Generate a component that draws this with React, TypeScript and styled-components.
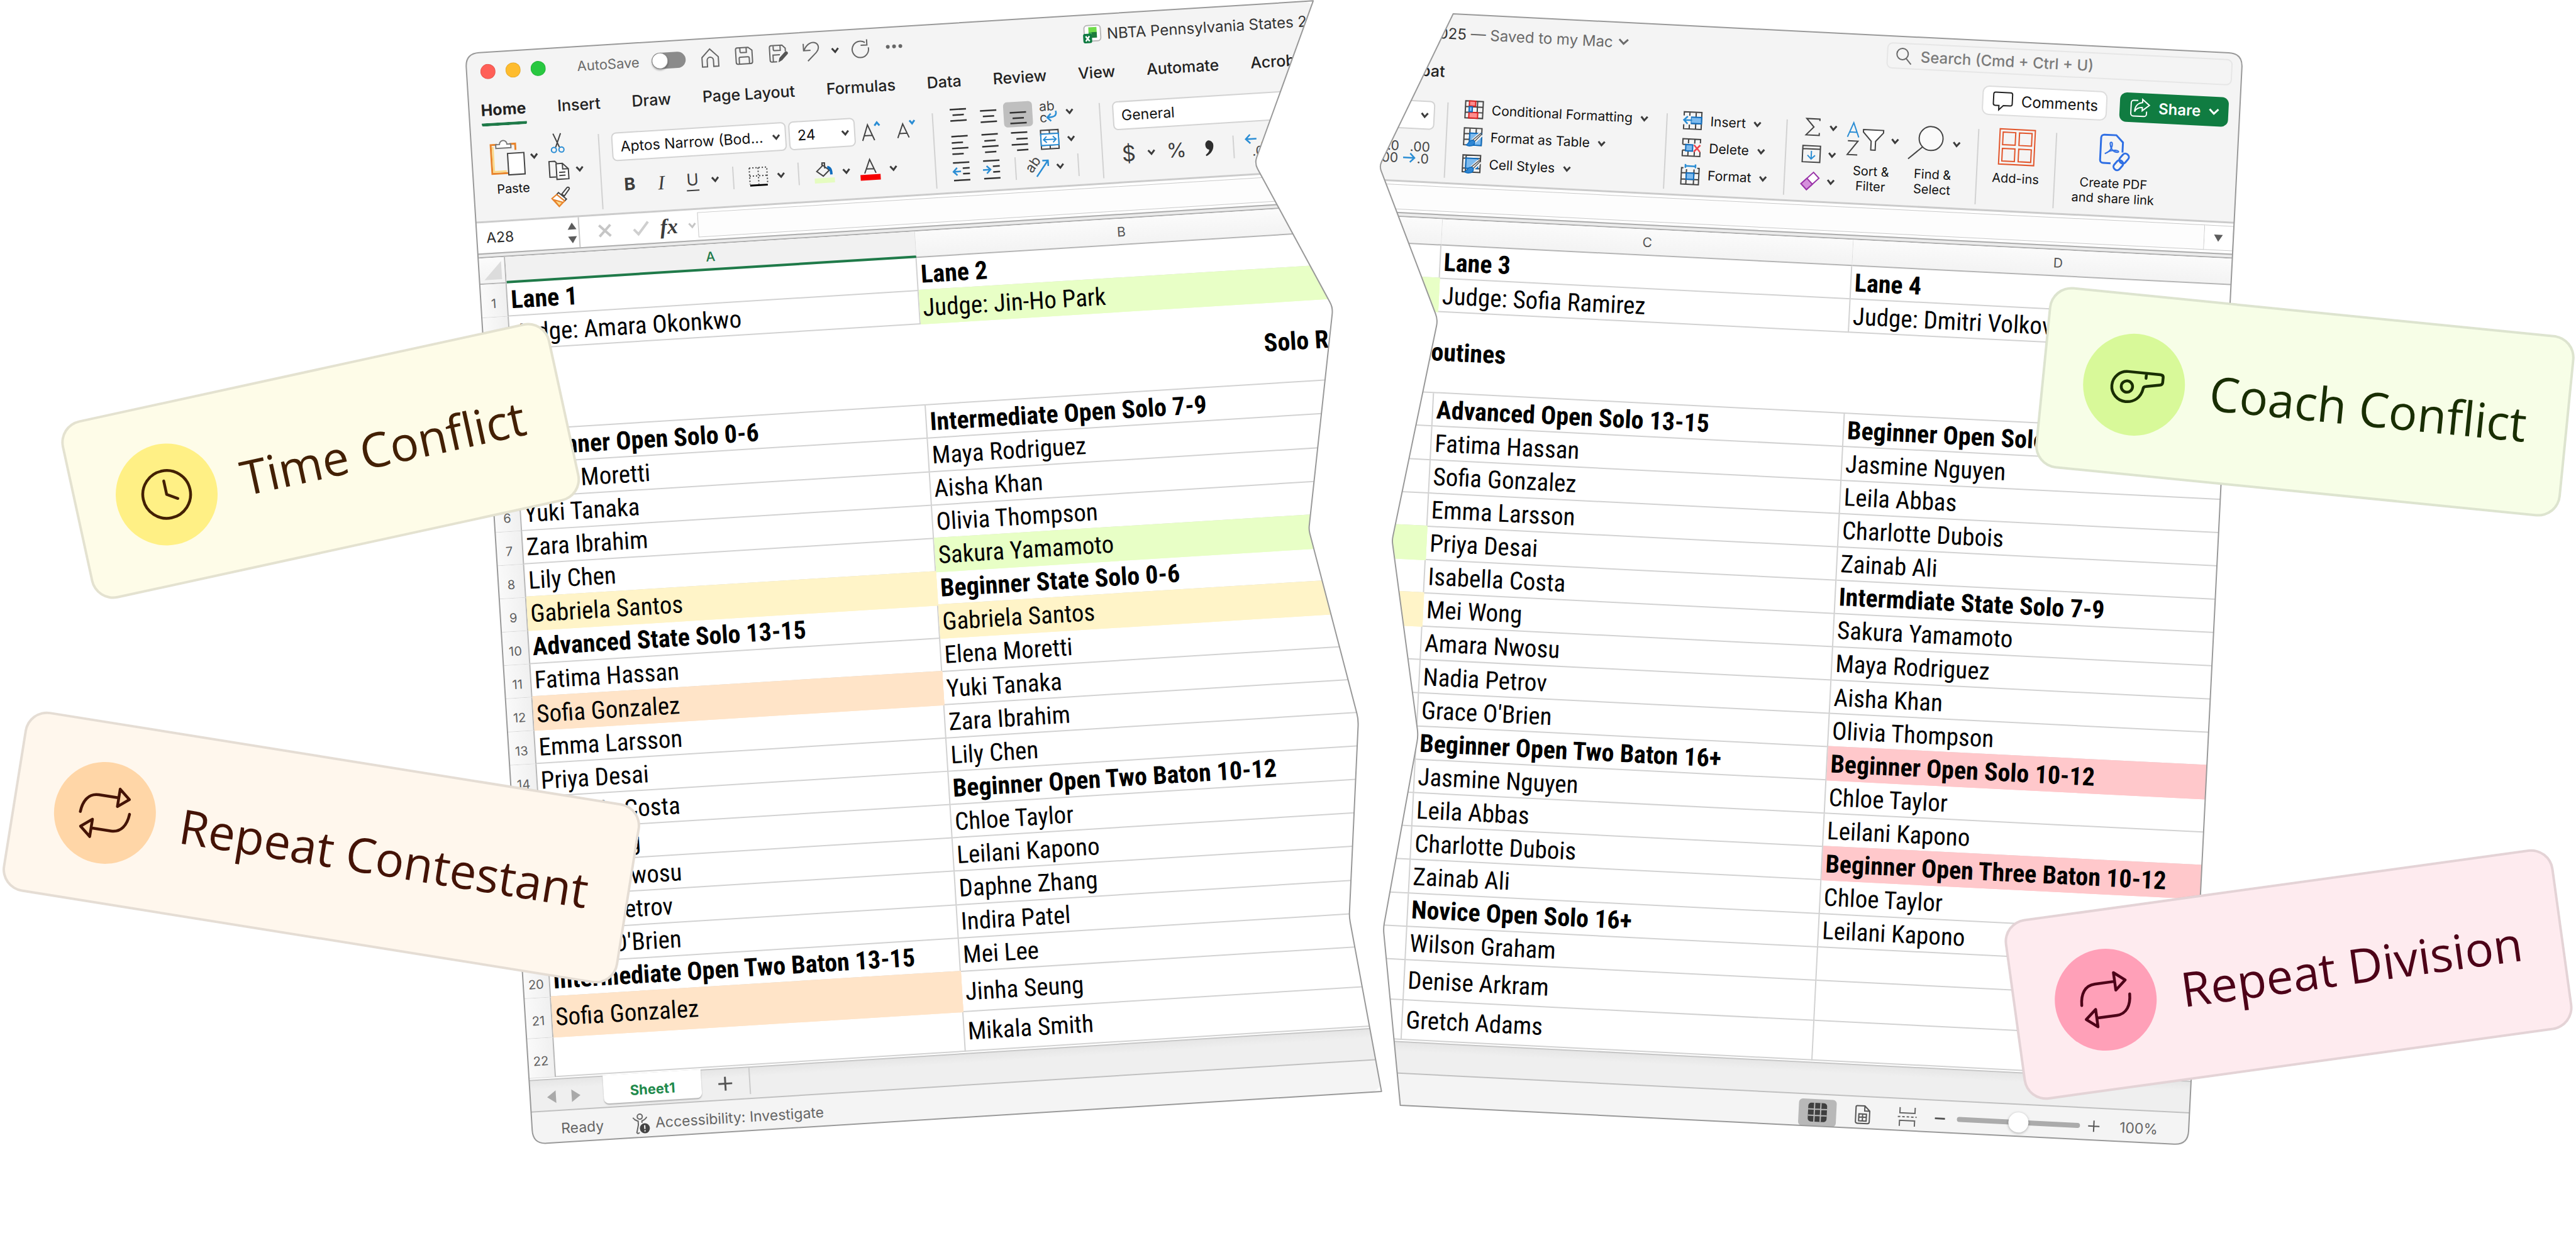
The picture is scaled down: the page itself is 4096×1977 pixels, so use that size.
import React from "react";
import styled, { createGlobalStyle, css } from "styled-components";

/* ------------------------------------------------------------------ */
/* Tokens                                                              */
/* ------------------------------------------------------------------ */

const ui = `Inter, "Liberation Sans", sans-serif`;
const cellFont = `"Roboto Condensed", Roboto, "Liberation Sans", sans-serif`;
const calloutFont = `"Open Sans", "Noto Sans", sans-serif`;

const color = {
  chrome: "#f4f4f4",
  ink: "#2b2b2b",
  muted: "#6a6a6a",
  icon: "#444444",
  blue: "#2a8dd4",
  line: "#d2d2d2",
  edge: "#999999",
  excel: "#1f7a49",
};

const fills = {
  green: "#e8ffc6",
  yellow: "#fff4c8",
  orange: "#ffe4c8",
  red: "#ffc8cb",
};
type Fill = keyof typeof fills;

const GlobalStyle = createGlobalStyle`
  *, *::before, *::after { box-sizing: border-box; }
  body { margin: 0; background: #ffffff; font-family: ${ui}; color: ${color.ink}; }
  button, input, select { font: inherit; color: inherit; margin: 0; }
  svg { display: block; flex: none; overflow: visible; }
`;

/* ------------------------------------------------------------------ */
/* Torn window geometry                                                */
/* ------------------------------------------------------------------ */

type Vertex = [x: number, y: number, radius: number];

const PANE_HEIGHT = 1738;
const LEFT_WIDTH = 1351;
const RIGHT_WIDTH = 1362;

const leftShape: Vertex[] = [
  [0, 0, 22],
  [1350, 0, 0],
  [1241, 252, 10],
  [1351, 489, 10],
  [1291, 839, 6],
  [1351, 1145, 10],
  [1317, 1458, 8],
  [1351, 1738, 0],
  [0, 1738, 22],
];

const rightShape: Vertex[] = [
  [1362, 0, 22],
  [1362, 1738, 22],
  [108, 1738, 0],
  [67, 1458, 8],
  [107, 1149, 10],
  [50, 841, 6],
  [105, 487, 10],
  [0, 248, 8],
  [105, 0, 0],
];

const polygon = (shape: Vertex[], width: number) =>
  `polygon(${shape.map(([x, y]) => `${(x / width) * 100}% ${(y / PANE_HEIGHT) * 100}%`).join(", ")})`;

function roundedPath(shape: Vertex[]) {
  const toward = (a: Vertex, b: Vertex, r: number) => {
    const d = Math.hypot(b[0] - a[0], b[1] - a[1]);
    return `${a[0] + ((b[0] - a[0]) * r) / d} ${a[1] + ((b[1] - a[1]) * r) / d}`;
  };
  const n = shape.length;
  const parts = shape.map((v, i) => {
    const prev = shape[(i + n - 1) % n];
    const next = shape[(i + 1) % n];
    return `${i ? "L" : "M"}${toward(v, prev, v[2])} Q${v[0]} ${v[1]} ${toward(v, next, v[2])}`;
  });
  return parts.join(" ") + " Z";
}

/* ------------------------------------------------------------------ */
/* Page and window frame                                               */
/* ------------------------------------------------------------------ */

const Stage = styled.main`
  position: relative;
  width: 100%;
  height: 100vh;
  overflow: hidden;
`;

const Pane = styled.section<{ $side: "left" | "right" }>`
  position: absolute;
  ${({ $side }) =>
    $side === "left"
      ? css`
          left: 18.07vw;
          top: 85px;
          width: 33vw;
          transform: rotate(-3.55deg);
          transform-origin: 0 0;
        `
      : css`
          right: 12.95vw;
          top: 85px;
          width: 33.25vw;
          transform: rotate(2.87deg);
          transform-origin: 100% 0;
        `}
`;

const PaneBody = styled.div<{ $clip: string }>`
  display: flex;
  flex-direction: column;
  overflow: hidden;
  border-radius: 18px;
  background: ${color.chrome};
  clip-path: ${({ $clip }) => $clip};
`;

const Outline = styled.svg`
  position: absolute;
  inset: 0;
  width: 100%;
  height: 100%;
  pointer-events: none;
`;

function TornPane({
  side, shape, width, children, label,
}: {
  side: "left" | "right"; shape: Vertex[]; width: number; label: string; children: React.ReactNode;
}) {
  return (
    <Pane $side={side} aria-label={label}>
      <PaneBody $clip={polygon(shape, width)}>{children}</PaneBody>
      <Outline viewBox={`0 0 ${width} ${PANE_HEIGHT}`} preserveAspectRatio="none" aria-hidden="true">
        <path d={roundedPath(shape)} fill="none" stroke={color.edge} strokeWidth="2" strokeLinejoin="round" />
      </Outline>
    </Pane>
  );
}

/* ------------------------------------------------------------------ */
/* Shared controls                                                     */
/* ------------------------------------------------------------------ */

const Row = styled.div<{ $h?: number; $gap?: number; $pl?: number; $mt?: number }>`
  display: flex;
  align-items: center;
  height: ${({ $h }) => ($h ? `${$h}px` : "auto")};
  gap: ${({ $gap = 0 }) => $gap}px;
  padding-left: ${({ $pl = 0 }) => $pl}px;
  margin-top: ${({ $mt = 0 }) => $mt}px;
`;

const Tool = styled.button<{ $w: number }>`
  display: flex;
  align-items: center;
  justify-content: center;
  flex: none;
  width: ${({ $w }) => $w}px;
  height: 40px;
  padding: 0;
  border: 0;
  border-radius: 6px;
  background: none;
`;

const PressedTool = styled(Tool)`
  background: #bfbfbf;
`;

const MiniSlot = styled.span<{ $w: number }>`
  display: flex;
  justify-content: center;
  flex: none;
  width: ${({ $w }) => $w}px;
`;

const MiniRule = styled.span`
  width: 2px;
  height: 36px;
  background: ${color.line};
`;

const I = ({ w = 32, h = 32, children, s = color.icon, sw = 2 }: {
  w?: number; h?: number; s?: string; sw?: number; children: React.ReactNode;
}) => (
  <svg width={w} height={h} viewBox={`0 0 ${w} ${h}`} fill="none" stroke={s} strokeWidth={sw} aria-hidden="true">
    {children}
  </svg>
);

const Chevron = ({ c = "#3c3c3c", big = false }: { c?: string; big?: boolean }) =>
  big ? (
    <I w={18} h={12} s={c} sw={3}><path d="M2 2l7 7 7-7" /></I>
  ) : (
    <I w={14} h={12} s={c} sw={3}><path d="M2 3l5 6 5-6" /></I>
  );

const Mini = ({ w }: { w: number }) => (
  <Tool $w={w} aria-label="More options"><Chevron /></Tool>
);

const Divide = ({ w }: { w: number }) => <MiniSlot $w={w}><MiniRule /></MiniSlot>;

/* ------------------------------------------------------------------ */
/* Title bar                                                           */
/* ------------------------------------------------------------------ */

const TitleBar = styled.header`
  display: flex;
  align-items: center;
  height: 62px;
  padding: 0 15px 0 22px;
  flex: none;
  & > * { flex: none; }
`;

const Lights = styled.div`
  display: flex;
  gap: 16px;
`;

const Light = styled.button<{ $c: string }>`
  width: 24px;
  height: 24px;
  padding: 0;
  border: 1px solid rgba(0, 0, 0, 0.1);
  border-radius: 50%;
  background: ${({ $c }) => $c};
`;

const AutoSaveLabel = styled.label`
  width: 119px;
  margin-left: 50px;
  font-size: 22px;
  color: ${color.muted};
`;

const Switch = styled.input`
  appearance: none;
  width: 54px;
  height: 26px;
  border-radius: 13px;
  background: #8b8b8b;
  &::before {
    content: "";
    display: block;
    width: 26px;
    height: 26px;
    border-radius: 50%;
    border: 1px solid #8b8b8b;
    background: #fff;
    box-shadow: 0 2px 3px rgba(0, 0, 0, 0.3);
  }
`;

const DocTitle = styled.h1<{ $ml: number }>`
  display: flex;
  align-items: center;
  gap: 8px;
  margin: 0 0 0 ${({ $ml }) => $ml}px;
  font-size: 24px;
  font-weight: 400;
  white-space: nowrap;
  color: #333;
  & small { font-size: inherit; color: ${color.muted}; }
`;

const SearchBox = styled.label`
  display: flex;
  align-items: center;
  gap: 14px;
  width: 550px;
  height: 42px;
  margin-left: auto;
  padding: 0 12px;
  border: 2px solid #e6e6e6;
  border-radius: 9px;
`;

const SearchInput = styled.input`
  flex: 1;
  min-width: 0;
  padding: 0;
  border: 0;
  outline: 0;
  background: none;
  font-size: 24px;
  font-weight: 500;
  &::placeholder { color: #7a7a7a; opacity: 1; }
`;

/* ------------------------------------------------------------------ */
/* Tab strip                                                           */
/* ------------------------------------------------------------------ */

const TabStrip = styled.nav<{ $pl: number }>`
  display: flex;
  flex: none;
  gap: 50px;
  height: 56px;
  padding: 0 18px 0 ${({ $pl }) => $pl}px;
`;

const Tab = styled.button<{ $on?: boolean }>`
  flex: none;
  height: 56px;
  padding: 15px 0 6px;
  border: 0;
  border-bottom: 5px solid ${({ $on }) => ($on ? color.excel : "transparent")};
  border-radius: 3px;
  background: none;
  font-size: 25px;
  line-height: 30px;
  font-weight: ${({ $on }) => ($on ? 700 : 500)};
  color: #222;
`;

const Pill = styled.button<{ $solid?: boolean }>`
  display: flex;
  align-items: center;
  gap: 12px;
  height: 47px;
  margin-top: 9px;
  padding: 0 12px 0 14px;
  border: 2px solid ${({ $solid }) => ($solid ? "#107c41" : "#dddddd")};
  border-radius: 11px;
  background: ${({ $solid }) => ($solid ? "#107c41" : "#ffffff")};
  color: ${({ $solid }) => ($solid ? "#ffffff" : "#111111")};
  font-size: 24px;
  font-weight: ${({ $solid }) => ($solid ? 600 : 400)};
`;

const TabActions = styled.div`
  display: flex;
  gap: 20px;
  margin-left: auto;
`;

/* ------------------------------------------------------------------ */
/* Ribbon                                                              */
/* ------------------------------------------------------------------ */

const Ribbon = styled.div`
  display: flex;
  align-items: flex-start;
  flex: none;
  height: 150px;
  padding-top: 11px;
`;

const Group = styled.div<{ $w?: number; $pl?: number; $gap?: number }>`
  display: flex;
  flex: none;
  gap: ${({ $gap = 0 }) => $gap}px;
  width: ${({ $w }) => ($w ? `${$w}px` : "auto")};
  padding-left: ${({ $pl = 0 }) => $pl}px;
`;

const Stack = styled.div`
  display: flex;
  flex-direction: column;
`;

const GroupRule = styled.span`
  flex: none;
  width: 2px;
  height: 120px;
  margin-top: 12px;
  background: ${color.line};
`;

const PasteButton = styled.button`
  display: flex;
  flex-direction: column;
  width: 92px;
  margin-top: 11px;
  padding: 0;
  border: 0;
  background: none;
`;

const PasteLabel = styled.span`
  width: 70px;
  margin-top: 7px;
  font-size: 20px;
  line-height: 28px;
  text-align: center;
  color: #111;
`;

const SelectWrap = styled.span<{ $w: number }>`
  display: grid;
  flex: none;
  align-items: center;
  width: ${({ $w }) => $w}px;
  height: 46px;
  & > * { grid-area: 1 / 1; }
  & > svg { justify-self: end; margin-right: 9px; pointer-events: none; }
`;

const Select = styled.select`
  appearance: none;
  width: 100%;
  height: 46px;
  padding: 0 12px;
  border: 2px solid #d3d3d3;
  border-radius: 8px;
  background: #fff;
  font-size: 23px;
  color: #111;
`;

const Glyph = styled.span<{ $size?: number; $weight?: number; $italic?: boolean; $line?: boolean; $serif?: boolean }>`
  font-family: ${({ $serif }) => ($serif ? `"Liberation Serif", serif` : `inherit`)};
  font-size: ${({ $size = 26 }) => $size}px;
  font-weight: ${({ $weight = 400 }) => $weight};
  font-style: ${({ $italic }) => ($italic ? "italic" : "normal")};
  line-height: 32px;
  color: #3c3c3c;
  border-bottom: ${({ $line }) => ($line ? "2px solid #3c3c3c" : "0")};
`;

const TailSlot = styled.span`
  display: flex;
  justify-content: flex-end;
  flex: none;
  width: 37px;
`;

const Labelled = styled.button`
  display: flex;
  align-items: center;
  gap: 12px;
  height: 43px;
  padding: 0;
  border: 0;
  background: none;
  font-size: 21px;
  white-space: nowrap;
  color: #111;
`;

const BigTool = styled.button<{ $w: number }>`
  display: flex;
  flex-direction: column;
  align-items: center;
  flex: none;
  width: ${({ $w }) => $w}px;
  margin-top: 9px;
  padding: 0;
  border: 0;
  background: none;
  font-size: 20px;
  line-height: 24px;
  text-align: center;
  white-space: nowrap;
  color: #111;
`;

const BigIcon = styled.span<{ $gap?: number }>`
  display: flex;
  align-items: center;
  gap: ${({ $gap = 0 }) => $gap}px;
  height: 58px;
  margin-bottom: 9px;
`;

/* ------------------------------------------------------------------ */
/* Formula bar                                                         */
/* ------------------------------------------------------------------ */

const FormulaBar = styled.div`
  display: flex;
  align-items: center;
  flex: none;
  height: 51px;
  border-top: 3px solid #cbcbcb;
  background: #fff;
`;

const NameBox = styled.div`
  display: flex;
  align-items: center;
  justify-content: space-between;
  width: 164px;
  height: 100%;
  padding: 0 3px 0 15px;
  border-right: 2px solid #c8c8c8;
`;

const NameInput = styled.input`
  width: 90px;
  padding: 0;
  border: 0;
  background: none;
  font-size: 23px;
`;

const FormulaInput = styled.input<{ $open?: boolean }>`
  flex: 1;
  min-width: 0;
  height: 40px;
  border: 1px solid #c9c9c9;
  border-left-width: ${({ $open }) => ($open ? 0 : 1)}px;
  background: #fdfdfd;
`;

const FormulaToggle = styled.button`
  display: flex;
  align-items: center;
  justify-content: center;
  width: 46px;
  height: 40px;
  padding: 0;
  border: 1px solid #c9c9c9;
  border-left: 0;
  background: #fff;
`;

const DoubleRule = styled.div`
  flex: none;
  height: 8px;
  border: solid #adadad;
  border-width: 2px 0;
  background: #ececec;
`;

/* ------------------------------------------------------------------ */
/* Sheet                                                               */
/* ------------------------------------------------------------------ */

const Sheet = styled.div`
  flex: none;
  height: 1309px;
  overflow: hidden;
  background: #fff;
`;

const Grid = styled.table<{ $extra: number }>`
  width: calc(100% + ${({ $extra }) => $extra}px);
  height: 1307px;
  border-collapse: separate;
  border-spacing: 0;
  table-layout: fixed;
`;

const Col = styled.col<{ $w: number }>`
  width: ${({ $w }) => $w}px;
`;

const ColHead = styled.th<{ $active?: boolean }>`
  height: 42px;
  padding: 0;
  border-right: 1px solid #dedede;
  border-bottom: 2px solid #b4b4b4;
  background: linear-gradient(#fbfbfb, #f3f3f3);
  font-size: 21px;
  font-weight: 400;
  color: #555;
  ${({ $active }) =>
    $active &&
    css`
      background: #f1f1f1;
      border-bottom: 4px solid ${color.excel};
      color: ${color.excel};
      font-weight: 500;
    `}
`;

const Corner = styled(ColHead)`
  border-right: 2px solid #b4b4b4;
  & > svg { margin: 0 4px 0 auto; }
`;

const RowHead = styled.th`
  padding: 10px 0 0;
  border-right: 2px solid #b8b8b8;
  border-bottom: 1px solid #d8d8d8;
  background: linear-gradient(90deg, #fafafa, #f0f0f0);
  font-size: 20px;
  font-weight: 400;
  color: #5e5e5e;
`;

const Line = styled.tr<{ $h: number }>`
  height: ${({ $h }) => $h}px;
`;

const Cell = styled.td<{ $bold?: boolean; $fill?: Fill }>`
  padding: 2px 0 0 5px;
  border-right: 2px solid ${color.line};
  border-bottom: 2px solid ${color.line};
  font-family: ${cellFont};
  font-size: ${({ $bold }) => ($bold ? 40 : 39)}px;
  line-height: 44px;
  font-weight: ${({ $bold }) => ($bold ? 700 : 400)};
  white-space: nowrap;
  color: #000;
  ${({ $fill }) =>
    $fill &&
    css`
      background: ${fills[$fill]};
      border-color: ${fills[$fill]};
      box-shadow: 0 -2px 0 ${fills[$fill]};
    `}
`;

const BannerCell = styled(Cell)`
  padding: 0;
`;

const Banner = styled.div<{ $w: string }>`
  display: flex;
  justify-content: center;
  width: ${({ $w }) => $w};
`;

type Entry = string | [text: string, style: "b" | Fill | "rb"];

const rowHeights = [53, 53, 129, ...Array(17).fill(53), 64, 63] as number[];

const colA: Entry[] = [
  ["Lane 1", "b"], "Judge: Amara Okonkwo", "",
  ["Beginner Open Solo 0-6", "b"], "Elena Moretti", "Yuki Tanaka", "Zara Ibrahim", "Lily Chen",
  ["Gabriela Santos", "yellow"], ["Advanced State Solo 13-15", "b"], "Fatima Hassan",
  ["Sofia Gonzalez", "orange"], "Emma Larsson", "Priya Desai", "Isabella Costa", "Mei Wong",
  "Amara Nwosu", "Nadia Petrov", "Grace O'Brien", ["Intermediate Open Two Baton 13-15", "b"],
  ["Sofia Gonzalez", "orange"], "",
];

const colB: Entry[] = [
  ["Lane 2", "b"], ["Judge: Jin-Ho Park", "green"], "",
  ["Intermediate Open Solo 7-9", "b"], "Maya Rodriguez", "Aisha Khan", "Olivia Thompson",
  ["Sakura Yamamoto", "green"], ["Beginner State Solo 0-6", "b"], ["Gabriela Santos", "yellow"],
  "Elena Moretti", "Yuki Tanaka", "Zara Ibrahim", "Lily Chen",
  ["Beginner Open Two Baton 10-12", "b"], "Chloe Taylor", "Leilani Kapono", "Daphne Zhang",
  "Indira Patel", "Mei Lee", "Jinha Seung", "Mikala Smith",
];

const colC: Entry[] = [
  ["Lane 3", "b"], "Judge: Sofia Ramirez", "",
  ["Advanced Open Solo 13-15", "b"], "Fatima Hassan", "Sofia Gonzalez", "Emma Larsson",
  "Priya Desai", "Isabella Costa", "Mei Wong", "Amara Nwosu", "Nadia Petrov", "Grace O'Brien",
  ["Beginner Open Two Baton 16+", "b"], "Jasmine Nguyen", "Leila Abbas", "Charlotte Dubois",
  "Zainab Ali", ["Novice Open Solo 16+", "b"], "Wilson Graham", "Denise Arkram", "Gretch Adams",
];

const colD: Entry[] = [
  ["Lane 4", "b"], "Judge: Dmitri Volkov", "",
  ["Beginner Open Solo", "b"], "Jasmine Nguyen", "Leila Abbas", "Charlotte Dubois", "Zainab Ali",
  ["Intermdiate State Solo 7-9", "b"], "Sakura Yamamoto", "Maya Rodriguez", "Aisha Khan",
  "Olivia Thompson", ["Beginner Open Solo 10-12", "rb"], "Chloe Taylor", "Leilani Kapono",
  ["Beginner Open Three Baton 10-12", "rb"], "Chloe Taylor", "Leilani Kapono", "", "", "",
];

/* The hidden remainder of column B on the right half keeps only its fills. */
const tailB: Entry[] = colB.map((e) =>
  Array.isArray(e) && e[1] !== "b" ? (["", e[1]] as Entry) : ""
);

const renderCell = (entry: Entry, key: string) => {
  const [text, style] = Array.isArray(entry) ? entry : [entry, undefined];
  const fill = style === "rb" ? "red" : style === "b" ? undefined : style;
  return (
    <Cell key={key} $bold={style === "b" || style === "rb"} $fill={fill as Fill | undefined}>{text}</Cell>
  );
};

/* ------------------------------------------------------------------ */
/* Footer                                                              */
/* ------------------------------------------------------------------ */

const SheetTabs = styled.div`
  display: flex;
  align-items: flex-start;
  flex: none;
  height: 52px;
  border-top: 2px solid #c6c6c6;
  border-bottom: 2px solid #c0c0c0;
  background: linear-gradient(#e6e6e6, #efefef 14px);
`;

const SheetTab = styled.button`
  width: 156px;
  height: 45px;
  margin: -2px 0 0 10px;
  padding: 6px 0 0;
  border: 0;
  border-radius: 0 0 8px 8px;
  background: #fff;
  box-shadow: 0 2px 2px rgba(0, 0, 0, 0.25);
  font-size: 22px;
  font-weight: 700;
  color: #1f8a4c;
`;

const TabRule = styled.span`
  width: 2px;
  height: 42px;
  background: #cccccc;
`;

const Status = styled.footer`
  display: flex;
  align-items: center;
  flex: none;
  height: 50px;
  padding-top: 6px;
  font-size: 23px;
  color: #666;
`;

const StatusLeft = styled(Status)`
  padding-left: 46px;
  gap: 44px;
`;

const StatusItem = styled.span`
  display: flex;
  align-items: center;
  gap: 8px;
`;

const StatusRight = styled(Status)`
  padding-right: 49px;
  justify-content: flex-end;
`;

const ViewButton = styled(Tool)<{ $on?: boolean }>`
  height: 43px;
  background: ${({ $on }) => ($on ? "#b8b8b8" : "none")};
`;

const Zoom = styled.input`
  appearance: none;
  width: 196px;
  height: 32px;
  margin: 0 4px;
  background: none;
  &::-webkit-slider-runnable-track {
    height: 8px;
    border-radius: 4px;
    background: #ababab;
  }
  &::-webkit-slider-thumb {
    appearance: none;
    width: 32px;
    height: 32px;
    margin-top: -12px;
    border-radius: 50%;
    background: #fff;
    box-shadow: 0 1px 4px rgba(0, 0, 0, 0.3);
  }
`;

const Percent = styled.output`
  width: 61px;
  margin-left: 23px;
`;

/* ------------------------------------------------------------------ */
/* Icons                                                               */
/* ------------------------------------------------------------------ */

const HomeIcon = () => <I w={30} h={32} s="#666"><path d="M2 15L15 2l13 13v15h-8V20a5 5 0 0 0-10 0v10H2z" /></I>;

const SaveIcon = ({ pen = false }: { pen?: boolean }) => (
  <I w={30} h={30} s="#666">
    <path d={pen ? "M13 28H5a3 3 0 0 1-3-3V5a3 3 0 0 1 3-3h17l5 5v5M8 2v6a2 2 0 0 0 2 2h9V2M7 28V17h11" : "M5 2h17l6 5v18a3 3 0 0 1-3 3H5a3 3 0 0 1-3-3V5a3 3 0 0 1 3-3zM9 2v6a2 2 0 0 0 2 2h8V2M7 28V19a2 2 0 0 1 2-2h12a2 2 0 0 1 2 2v9"} />
    {pen && <path d="M15 29l2-7 9-9a2 2 0 0 1 4 4l-9 9z" fill="#555" stroke="none" />}
  </I>
);

const UndoIcon = () => <I w={30} h={34} s="#666"><path d="M3 4v11h11M4 14C9 4 17 1 23 4c6 4 4 11 0 15L9 32" /></I>;
const RedoIcon = () => <I w={32} h={32} s="#666"><path d="M23 7A13 13 0 1 0 28 15M26 2v9h-10" /></I>;
const DotsIcon = () => (
  <I w={26} h={8} s="none"><g fill="#666"><circle cx="3" cy="4" r="3" /><circle cx="13" cy="4" r="3" /><circle cx="23" cy="4" r="3" /></g></I>
);

const ExcelIcon = () => (
  <I w={30} h={30} s="none">
    <rect x="2" y="1" width="26" height="25" rx="5" fill="#fff" stroke="#b9b9b9" strokeWidth="2" />
    <rect x="9" y="4" width="13" height="9" fill="#6fdc4a" />
    <rect x="13" y="12" width="9" height="9" fill="#1d7d3c" />
    <rect x="9" y="12" width="5" height="6" fill="#3fb34f" />
    <rect x="0" y="14" width="14" height="15" rx="3" fill="#0f7a41" />
    <path d="M4 18l6 8M10 18l-6 8" stroke="#fff" strokeWidth="2.5" />
  </I>
);

const PasteIcon = () => (
  <I w={56} h={60}>
    <path d="M13 9H3v46h25M33 9h9v10" stroke="#e8842c" strokeWidth="3" />
    <path d="M6 12v40h20" stroke="#fbd98a" strokeWidth="3" />
    <path d="M11 15V9h6a6 6 0 0 1 12 0h6v6z" fill="#fff" stroke="#777" />
    <rect x="29" y="24" width="26" height="34" fill="#fff" />
  </I>
);

const CutIcon = () => (
  <I w={24} h={32}>
    <path d="M6 1l9 22M18 1L9 23" />
    <circle cx="6" cy="27" r="4" stroke={color.blue} /><circle cx="18" cy="27" r="4" stroke={color.blue} />
  </I>
);

const CopyIcon = () => (
  <I w={34} h={32}>
    <path d="M12 27H2V2h9l3 3" />
    <path d="M13 6h10l9 9v16H13z" fill="#fff" /><path d="M23 6v9h9M17 20h10M17 25h10" />
  </I>
);

const BrushIcon = () => (
  <I w={32} h={32}>
    <path d="M18 12L27 2a2 2 0 0 1 3 3L22 15z" fill="#fff" />
    <path d="M13 9l12 11-3 3L10 12z" fill="#fff" />
    <path d="M10 12L2 18l11 13 9-8z" fill="#fff" stroke="#e8842c" /><path d="M5 20l14 5-6 6z" fill="#fbd98a" stroke="#e8842c" />
  </I>
);

const FontSizeIcon = ({ down = false }: { down?: boolean }) => (
  <I w={34} h={34}>
    <path d={down ? "M3 31L12 9l9 22M6 24h12" : "M3 32L12 7l10 25M6 24h13"} />
    <path d={down ? "M23 4l4 5 4-5" : "M23 9l4-5 4 5"} stroke={color.blue} strokeWidth="3" />
  </I>
);

const BorderIcon = () => (
  <I w={32} h={32}><path d="M2 2h28v26M2 2v26M16 2v26M2 15h28" strokeDasharray="2 3" /><path d="M2 30h28" stroke="#000" strokeWidth="3" /></I>
);

const FillIcon = () => (
  <I w={34} h={34}>
    <path d="M13 4l12 10-10 9L5 15l9-8V2h4v9" /><path d="M22 9c5 1 6 5 6 12" stroke="#0f6cbd" strokeWidth="4" />
    <rect x="1" y="26" width="32" height="8" fill="#e5fcc0" stroke="none" />
  </I>
);

const FontColorIcon = () => (
  <I w={34} h={34}><path d="M8 23L17 1l9 22M11 16h12" /><rect x="1" y="25" width="32" height="9" fill="#f60000" stroke="none" /></I>
);

const LinesIcon = ({ kind }: { kind: "top" | "middle" | "bottom" | "left" | "center" | "right" }) => {
  const d = {
    top: "M3 3h26M7 12h18M3 21h26",
    middle: "M3 8h26M7 17h18M3 26h26",
    bottom: "M3 14h26M7 23h18M3 31h26",
    left: "M3 3h26M3 13h18M3 22h26M3 31h18",
    center: "M3 3h26M7 13h18M3 22h26M7 31h18",
    right: "M3 3h26M11 13h18M3 22h26M11 31h18",
  }[kind];
  return <I w={32} h={34}><path d={d} strokeWidth="2.5" stroke="#333" /></I>;
};

const IndentIcon = ({ out = false }: { out?: boolean }) => (
  <I w={32} h={34}>
    <path d="M3 2h26M18 11h11M18 20h11M3 30h26" stroke="#333" strokeWidth="2.5" />
    <path d={out ? "M15 16H4M9 10l-6 6 6 6" : "M2 16h11M8 10l6 6-6 6"} stroke={color.blue} strokeWidth="2.5" />
  </I>
);

const SvgText = styled.text<{ $size: number }>`
  font-family: ${ui};
  font-size: ${({ $size }) => $size}px;
  fill: ${color.icon};
  stroke: none;
`;

const WrapIcon = () => (
  <I w={32} h={36}>
    <SvgText x="2" y="15" $size={21}>ab</SvgText><SvgText x="2" y="33" $size={21}>c</SvgText>
    <path d="M28 16c2 8-3 10-13 10M20 20l-6 6 6 6" stroke={color.blue} strokeWidth="2.5" />
  </I>
);

const MergeIcon = () => (
  <I w={32} h={34}>
    <path d="M2 2h28v30H2zM2 8h28M2 26h28M16 2v6M16 26v6" />
    <path d="M2 8h28v18H2z" fill="#fff" stroke={color.blue} /><path d="M7 17h18M11 12l-5 5 5 5M21 12l5 5-5 5" stroke={color.blue} />
  </I>
);

const OrientIcon = () => (
  <I w={36} h={36}>
    <g transform="rotate(-52 14 14)"><SvgText x="-2" y="16" $size={22}>ab</SvgText></g>
    <path d="M13 33L32 8M23 8h9v9" stroke={color.blue} strokeWidth="2.5" />
  </I>
);

const DecimalIcon = ({ less = false }: { less?: boolean }) => (
  <I w={52} h={42}>
    <SvgText x={less ? 14 : 26} y="18" $size={21}>{less ? ".00" : ".0"}</SvgText>
    <SvgText x={less ? 26 : 12} y="37" $size={21}>{less ? ".0" : ".00"}</SvgText>
    <path d={less ? "M4 29h18M15 22l7 7-7 7" : "M20 10H3M10 3l-7 7 7 7"} stroke={color.blue} strokeWidth="2.5" />
  </I>
);

const GridBase = () => <path d="M2 2h28v27H2zM2 11h28M2 20h28M11 2v27M21 2v27" />;

const ConditionalIcon = () => (
  <I w={32} h={31}>
    <GridBase />
    <rect x="8" y="2" width="10" height="8" fill="#ff8d8d" stroke="#d92222" /><rect x="8" y="20" width="14" height="9" fill="#ff8d8d" stroke="#d92222" />
    <rect x="8" y="11" width="5" height="8" fill="#7fbbee" stroke="#0f6cbd" />
  </I>
);

const PaintGridIcon = ({ cell = false }: { cell?: boolean }) => (
  <I w={32} h={32}>
    {cell ? <path d="M2 2h28v27H2zM2 7h28M7 2v27M2 23h28" /> : <GridBase />}
    <rect x={cell ? 7 : 11} y={cell ? 7 : 10} width="19" height={cell ? 16 : 19} fill="#7fbbee" stroke="#0f6cbd" />
    <path d="M29 11L17 23" stroke="#f4f4f4" strokeWidth="8" />
    <path d="M30 11L19 23l-3-2L28 10z" fill="#fff" stroke="#555" strokeWidth="1.5" />
    <path d="M17 21c4 2 3 8-2 9-4 1-7 1-9-1 4-1 3-8 11-8z" fill="#2f86d3" stroke="#0f6cbd" strokeWidth="1.5" />
  </I>
);

const InsertIcon = () => (
  <I w={32} h={31}>
    <GridBase /><rect x="13" y="10" width="17" height="10" fill="#7fbbee" stroke="#0f6cbd" />
    <rect x="0" y="8" width="13" height="14" fill="#f4f4f4" stroke="none" /><path d="M15 15H2M8 9l-6 6 6 6" stroke={color.blue} strokeWidth="2.5" />
  </I>
);

const DeleteIcon = () => (
  <I w={32} h={31}>
    <path d="M2 11V2h28v6M2 20v9h28v-7M2 11h8M2 20h8M11 2v7M21 2v7M11 22v7M21 22v7" />
    <rect x="7" y="11" width="11" height="10" fill="#7fbbee" stroke="#0f6cbd" /><path d="M20 11l10 11M30 11L20 22" stroke="#f0434b" strokeWidth="2.5" />
  </I>
);

const FormatIcon = () => (
  <I w={32} h={34}>
    <path d="M5 6H2v26h28V6h-3M2 14h28M2 24h28M10 8v24M22 8v24" /><rect x="10" y="14" width="12" height="10" fill="#7fbbee" stroke="#0f6cbd" />
    <path d="M8 3h16M8 0v6M24 0v6" stroke={color.blue} strokeWidth="2.5" />
  </I>
);

const SigmaIcon = () => <I w={26} h={30}><path d="M24 5V2H3l12 13L3 28h21v-4" /></I>;
const FillDownIcon = () => (
  <I w={32} h={30}><path d="M2 2h28v26H2zM2 7h28" /><path d="M16 10v13M10 17l6 6 6-6" stroke={color.blue} /></I>
);
const EraserIcon = () => (
  <I w={32} h={32} s="#9a35a8"><path d="M21 2l9 9-19 19-9-9z" fill="#fff" /><path d="M11 12l9 9-9 9-9-9z" fill="#d58fdc" /></I>
);

const SortIcon = () => (
  <I w={62} h={56}>
    <path d="M3 25L12 2l9 23M6 17h12" stroke={color.blue} /><path d="M4 31h16L4 53h16" />
    <path d="M28 12h32v4L48 30v14h-7V30L28 16z" fill="#fff" />
  </I>
);

const FindIcon = () => <I w={58} h={56}><circle cx="37" cy="21" r="19" fill="#fafafa" /><path d="M24 35L2 55" /></I>;

const AddInsIcon = () => (
  <I w={60} h={60} s="#e2562c"><path d="M2 2h56v56H2zM7 7h20v20H7zM33 7h20v20H33zM7 33h20v20H7zM33 33h20v20H33z" /></I>
);

const PdfIcon = () => (
  <I w={52} h={58} s="#2f6fe4" sw={3}>
    <path d="M20 47H8a5 5 0 0 1-5-5V7a5 5 0 0 1 5-5h19l11 11v16" />
    <path d="M10 32c8-3 12-10 11-17-1-3-4-1-3 2 1 7 5 12 12 12 3 0 2-3-2-3-7 0-12 2-16 5z" strokeWidth="2" />
    <g transform="rotate(-52 36 44)"><rect x="21" y="39" width="17" height="11" rx="5" /><rect x="35" y="39" width="17" height="11" rx="5" /></g>
  </I>
);

const SearchIcon = () => <I w={26} h={28} s="#6a6a6a"><circle cx="11" cy="11" r="9" /><path d="M17 18l8 9" /></I>;
const CommentIcon = () => <I w={34} h={32} s="#222"><path d="M5 2h24a3 3 0 0 1 3 3v15a3 3 0 0 1-3 3H18l-7 7v-7H5a3 3 0 0 1-3-3V5a3 3 0 0 1 3-3z" /></I>;
const ShareIcon = () => (
  <I w={34} h={32} s="#fff"><path d="M13 4H6a4 4 0 0 0-4 4v17a4 4 0 0 0 4 4h17a4 4 0 0 0 4-4v-4M20 2l11 9-11 9v-5c-6 0-10 2-12 7 0-9 5-14 12-15z" /></I>
);

const TriIcon = ({ d, c = "#5c5c5c", w = 14, h = 11 }: { d: string; c?: string; w?: number; h?: number }) => (
  <I w={w} h={h} s="none"><path d={d} fill={c} /></I>
);

const AccessIcon = () => (
  <I w={30} h={34} s="#666">
    <circle cx="14" cy="6" r="4" /><path d="M3 7c3 5 6 5 8 6v6L8 31c1 2 3 2 4 0M25 7c-3 5-6 5-8 6v3" />
    <circle cx="21" cy="25" r="8" fill="#444" stroke="none" /><path d="M21 20v6M21 28v2" stroke="#fff" />
  </I>
);

const NormalViewIcon = () => (
  <I w={30} h={30} s="none"><rect width="30" height="30" rx="5" fill="#3f3f3f" /><path d="M10 0v30M20 0v30M0 10h30M0 20h30" stroke="#b8b8b8" strokeWidth="2" /></I>
);
const PageViewIcon = () => (
  <I w={26} h={32} s="#555"><path d="M4 2h12l8 8v17a3 3 0 0 1-3 3H5a3 3 0 0 1-3-3V4a2 2 0 0 1 2-2zM16 2v8h8M7 15h12v11H7zM7 20h12M13 15v11" /></I>
);
const BreakViewIcon = () => (
  <I w={30} h={34} s="#666"><path d="M3 2v9h24V2M3 32v-9h24v9" /><path d="M0 17h30" strokeDasharray="4 3" /></I>
);

/* ------------------------------------------------------------------ */
/* Window halves                                                       */
/* ------------------------------------------------------------------ */

const tabs = ["Home", "Insert", "Draw", "Page Layout", "Formulas", "Data", "Review", "View", "Automate", "Acrobat"];

function LeftHalf() {
  return (
    <TornPane side="left" shape={leftShape} width={LEFT_WIDTH} label="Workbook, left half">
      <TitleBar>
        <Lights>
          <Light $c="#ff5f57" aria-label="Close" /><Light $c="#febc2e" aria-label="Minimise" /><Light $c="#28c840" aria-label="Zoom" />
        </Lights>
        <AutoSaveLabel htmlFor="autosave">AutoSave</AutoSaveLabel>
        <Switch id="autosave" type="checkbox" />
        <MiniSlot $w={12} />
        <Tool $w={54} aria-label="Home"><HomeIcon /></Tool>
        <Tool $w={54} aria-label="Save"><SaveIcon /></Tool>
        <Tool $w={54} aria-label="Save as"><SaveIcon pen /></Tool>
        <Tool $w={52} aria-label="Undo"><UndoIcon /></Tool>
        <Mini w={24} />
        <Tool $w={58} aria-label="Redo"><RedoIcon /></Tool>
        <Tool $w={48} aria-label="More commands"><DotsIcon /></Tool>
        <DocTitle $ml={277}><ExcelIcon />NBTA Pennsylvania States 2025</DocTitle>
      </TitleBar>

      <TabStrip $pl={19}>
        {tabs.map((t, i) => <Tab key={t} $on={i === 0}>{t}</Tab>)}
      </TabStrip>

      <Ribbon>
        <Group $w={202} $pl={28}>
          <PasteButton>
            <Row $gap={8} $h={58}><PasteIcon /><Chevron /></Row>
            <PasteLabel>Paste</PasteLabel>
          </PasteButton>
          <Stack>
            <Row $h={43}><Tool $w={34} aria-label="Cut"><CutIcon /></Tool></Row>
            <Row $h={43}><Tool $w={34} aria-label="Copy"><CopyIcon /></Tool><Mini w={32} /></Row>
            <Row $h={43}><Tool $w={34} aria-label="Format painter"><BrushIcon /></Tool></Row>
          </Stack>
        </Group>
        <GroupRule />
        <Group $w={530} $pl={19}>
          <Stack>
            <Row $mt={11} $h={46}>
              <SelectWrap $w={278}><Select aria-label="Font"><option>Aptos Narrow (Bod...</option></Select><Chevron /></SelectWrap>
              <MiniSlot $w={4} />
              <SelectWrap $w={106}><Select aria-label="Font size"><option>24</option></Select><Chevron /></SelectWrap>
              <Tool $w={50} aria-label="Increase font size"><FontSizeIcon /></Tool>
              <Tool $w={62} aria-label="Decrease font size"><FontSizeIcon down /></Tool>
            </Row>
            <Row $mt={19} $h={38}>
              <Tool $w={50}><Glyph $weight={700} $size={27}>B</Glyph></Tool>
              <Tool $w={50}><Glyph $italic $serif $size={32}>I</Glyph></Tool>
              <Tool $w={50}><Glyph $line>U</Glyph></Tool>
              <Mini w={22} />
              <Divide w={36} />
              <Tool $w={44} aria-label="Borders"><BorderIcon /></Tool><Mini w={28} />
              <Divide w={28} />
              <Tool $w={54} aria-label="Fill colour"><FillIcon /></Tool><Mini w={16} />
              <Tool $w={60} aria-label="Font colour"><FontColorIcon /></Tool><Mini w={14} />
            </Row>
          </Stack>
        </Group>
        <GroupRule />
        <Group $w={264} $pl={16}>
          <Stack>
            <Row $h={43}>
              <Tool $w={48} aria-label="Top align"><LinesIcon kind="top" /></Tool>
              <Tool $w={48} aria-label="Middle align"><LinesIcon kind="middle" /></Tool>
              <PressedTool $w={46} aria-label="Bottom align" aria-pressed="true"><LinesIcon kind="bottom" /></PressedTool>
              <Tool $w={50} aria-label="Wrap text"><WrapIcon /></Tool><Mini w={18} />
            </Row>
            <Row $h={43}>
              <Tool $w={48} aria-label="Align left"><LinesIcon kind="left" /></Tool>
              <Tool $w={48} aria-label="Align centre"><LinesIcon kind="center" /></Tool>
              <Tool $w={46} aria-label="Align right"><LinesIcon kind="right" /></Tool>
              <Tool $w={50} aria-label="Merge and centre"><MergeIcon /></Tool><Mini w={18} />
            </Row>
            <Row $h={43}>
              <Tool $w={48} aria-label="Decrease indent"><IndentIcon out /></Tool>
              <Tool $w={48} aria-label="Increase indent"><IndentIcon /></Tool>
              <Divide w={28} />
              <Tool $w={48} aria-label="Orientation"><OrientIcon /></Tool><Mini w={18} />
              <Divide w={40} />
            </Row>
          </Stack>
        </Group>
        <GroupRule />
        <Group $pl={19}>
          <Stack>
            <Row $mt={11} $h={46}>
              <SelectWrap $w={309}><Select aria-label="Number format"><option>General</option></Select></SelectWrap>
            </Row>
            <Row $mt={19} $h={38}>
              <Tool $w={44}><Glyph $size={34}>$</Glyph></Tool><Mini w={28} />
              <Tool $w={52}><Glyph $size={32}>%</Glyph></Tool>
              <Tool $w={52} aria-label="Comma style"><I w={20} h={26} s="none"><path d="M9 0a8 8 0 0 1 8 8c0 8-5 14-12 17l-1-2c4-3 6-5 6-8A8 8 0 0 1 9 0z" fill="#2e2e2e" /></I></Tool>
              <Divide w={26} />
              <Tool $w={60} aria-label="Increase decimal"><DecimalIcon /></Tool>
            </Row>
          </Stack>
        </Group>
      </Ribbon>

      <FormulaBar>
        <NameBox>
          <NameInput aria-label="Name box" defaultValue="A28" />
          <Stack>
            <Row $h={22}><TriIcon d="M7 0l7 11H0z" /></Row>
            <Row $h={22}><TriIcon d="M7 11L0 0h14z" /></Row>
          </Stack>
        </NameBox>
        <Tool $w={80} aria-label="Cancel"><I w={24} h={24} s="#c6c6c6" sw={4}><path d="M3 3l18 18M21 3L3 21" /></I></Tool>
        <Tool $w={34} aria-label="Enter"><I w={28} h={24} s="#cfcfcf" sw={4}><path d="M3 13l7 8L26 2" /></I></Tool>
        <Tool $w={56}><Glyph $serif $italic $weight={700} $size={34}>fx</Glyph></Tool>
        <Tool $w={18} aria-label="Function list"><Chevron c="#c6c6c6" /></Tool>
        <FormulaInput aria-label="Formula" />
      </FormulaBar>
      <DoubleRule />

      <Sheet>
        <Grid $extra={0}>
          <colgroup><Col $w={43} /><Col $w={653} /><col /></colgroup>
          <thead>
            <tr>
              <Corner aria-label="Select all"><I w={30} h={32} s="none"><path d="M29 2v29H1z" fill="#dcdcdc" /></I></Corner>
              <ColHead $active>A</ColHead>
              <ColHead>B</ColHead>
            </tr>
          </thead>
          <tbody>
            {rowHeights.map((h, i) => (
              <Line key={i} $h={h}>
                <RowHead scope="row">{i + 1}</RowHead>
                {i === 2 ? (
                  <BannerCell $bold colSpan={2}><Banner $w="200%">Solo Routines</Banner></BannerCell>
                ) : (
                  [renderCell(colA[i], "a"), renderCell(colB[i], "b")]
                )}
              </Line>
            ))}
          </tbody>
        </Grid>
      </Sheet>

      <SheetTabs>
        <Row $h={54} $pl={25} $gap={25}>
          <TriIcon w={16} h={20} d="M16 0v20L2 10z" c="#a9a9a9" />
          <TriIcon w={16} h={20} d="M0 0v20l14-10z" c="#a9a9a9" />
          <MiniSlot $w={0} />
        </Row>
        <SheetTab>Sheet1</SheetTab>
        <Row $h={46}>
          <Tool $w={76} aria-label="Add sheet"><I w={22} h={22} s="#555" sw={3}><path d="M11 0v22M0 11h22" /></I></Tool>
        </Row>
        <TabRule />
      </SheetTabs>
      <StatusLeft>
        <span>Ready</span>
        <StatusItem><AccessIcon />Accessibility: Investigate</StatusItem>
      </StatusLeft>
    </TornPane>
  );
}

function RightHalf() {
  return (
    <TornPane side="right" shape={rightShape} width={RIGHT_WIDTH} label="Workbook, right half">
      <TitleBar>
        <DocTitle $ml={47}><span>2025 <small>— Saved to my Mac</small></span><Chevron big c="#6a6a6a" /></DocTitle>
        <SearchBox><SearchIcon /><SearchInput type="search" aria-label="Search" placeholder="Search (Cmd + Ctrl + U)" /></SearchBox>
      </TitleBar>

      <TabStrip $pl={2}>
        <Tab>Acrobat</Tab>
        <TabActions>
          <Pill><CommentIcon />Comments</Pill>
          <Pill $solid><ShareIcon />Share<Chevron big c="#fff" /></Pill>
        </TabActions>
      </TabStrip>

      <Ribbon>
        <Group $w={103}>
          <Stack>
            <Row $mt={11} $h={46}>
              <SelectWrap $w={84}><Select aria-label="Number format, end"><option></option></Select><Chevron /></SelectWrap>
            </Row>
            <Row $mt={19} $h={38}>
              <TailSlot><Tool $w={52} aria-label="Increase decimal"><DecimalIcon /></Tool></TailSlot>
              <Tool $w={44} aria-label="Decrease decimal"><DecimalIcon less /></Tool>
            </Row>
          </Stack>
        </Group>
        <GroupRule />
        <Group $w={347} $pl={25}>
          <Stack>
            <Labelled><ConditionalIcon />Conditional Formatting<Chevron /></Labelled>
            <Labelled><PaintGridIcon />Format as Table<Chevron /></Labelled>
            <Labelled><PaintGridIcon cell />Cell Styles<Chevron /></Labelled>
          </Stack>
        </Group>
        <GroupRule />
        <Group $w={189} $pl={24}>
          <Stack>
            <Labelled><InsertIcon />Insert<Chevron /></Labelled>
            <Labelled><DeleteIcon />Delete<Chevron /></Labelled>
            <Labelled><FormatIcon />Format<Chevron /></Labelled>
          </Stack>
        </Group>
        <GroupRule />
        <Group $w={303} $pl={15} $gap={12}>
          <Stack>
            <Row $h={43}><Tool $w={50} aria-label="AutoSum"><SigmaIcon /></Tool><Mini w={16} /></Row>
            <Row $h={43}><Tool $w={50} aria-label="Fill"><FillDownIcon /></Tool><Mini w={16} /></Row>
            <Row $h={43}><Tool $w={50} aria-label="Clear"><EraserIcon /></Tool><Mini w={16} /></Row>
          </Stack>
          <BigTool $w={86}><BigIcon $gap={10}><SortIcon /><Chevron /></BigIcon>Sort &amp;<br />Filter</BigTool>
          <BigTool $w={86}><BigIcon $gap={13}><FindIcon /><Chevron /></BigIcon>Find &amp;<br />Select</BigTool>
        </Group>
        <GroupRule />
        <Group>
          <BigTool $w={122}><BigIcon><AddInsIcon /></BigIcon>Add-ins</BigTool>
        </Group>
        <GroupRule />
        <Group $pl={24}>
          <BigTool $w={138}><BigIcon><PdfIcon /></BigIcon>Create PDF<br />and share link</BigTool>
        </Group>
      </Ribbon>

      <FormulaBar>
        <FormulaInput $open aria-label="Formula, continued" />
        <FormulaToggle aria-label="Expand formula bar"><TriIcon d="M7 11L0 0h14z" /></FormulaToggle>
      </FormulaBar>
      <DoubleRule />

      <Sheet>
        <Grid $extra={51}>
          <colgroup><Col $w={105} /><Col $w={654} /><col /></colgroup>
          <thead>
            <tr><ColHead aria-label="B" /><ColHead>C</ColHead><ColHead>D</ColHead></tr>
          </thead>
          <tbody>
            {rowHeights.map((h, i) => (
              <Line key={i} $h={h}>
                {i === 2 ? (
                  <BannerCell $bold colSpan={3}><Banner $w="210px">Solo Routines</Banner></BannerCell>
                ) : (
                  [renderCell(tailB[i], "b"), renderCell(colC[i], "c"), renderCell(colD[i], "d")]
                )}
              </Line>
            ))}
          </tbody>
        </Grid>
      </Sheet>

      <SheetTabs />
      <StatusRight>
        <ViewButton $w={60} $on aria-label="Normal view"><NormalViewIcon /></ViewButton>
        <ViewButton $w={84} aria-label="Page layout view"><PageViewIcon /></ViewButton>
        <ViewButton $w={58} aria-label="Page break view"><BreakViewIcon /></ViewButton>
        <ViewButton $w={46} aria-label="Zoom out"><I w={16} h={16} s="#555" sw={3}><path d="M0 8h16" /></I></ViewButton>
        <Zoom type="range" aria-label="Zoom" defaultValue="50" />
        <ViewButton $w={36} aria-label="Zoom in"><I w={18} h={18} s="#555"><path d="M0 9h18M9 0v18" /></I></ViewButton>
        <Percent>100%</Percent>
      </StatusRight>
    </TornPane>
  );
}

/* ------------------------------------------------------------------ */
/* Conflict callouts                                                   */
/* ------------------------------------------------------------------ */

const Callout = styled.article<{ $x: string; $y: string; $turn: number; $bg: string; $ink: string }>`
  position: absolute;
  left: ${({ $x }) => $x};
  top: ${({ $y }) => $y};
  display: flex;
  align-items: center;
  gap: 40px;
  padding: 60px 62px;
  border: 4px solid rgba(0, 0, 0, 0.1);
  border-radius: 36px;
  background: ${({ $bg }) => $bg};
  color: ${({ $ink }) => $ink};
  font-family: ${calloutFont};
  font-size: 76px;
  line-height: 100px;
  white-space: nowrap;
  transform: translate(-50%, -50%) rotate(${({ $turn }) => $turn}deg);
`;

const Badge = styled.span<{ $bg: string }>`
  display: grid;
  place-items: center;
  width: 162px;
  height: 162px;
  border-radius: 50%;
  background: ${({ $bg }) => $bg};
`;

const BadgeIcon = ({ children }: { children: React.ReactNode }) => (
  <svg width="112" height="112" viewBox="-56 -56 112 112" fill="none" stroke="currentColor" strokeWidth="4.5" strokeLinecap="round" strokeLinejoin="round" aria-hidden="true">
    {children}
  </svg>
);

const Clock = () => <BadgeIcon><circle r="38" /><path d="M0-22V0l16 10" /></BadgeIcon>;
const Repeat = () => (
  <BadgeIcon>
    <path d="M-39 4C-38-14-30-27-14-27H18M18-41V-13L35-27z" />
    <path d="M39-4C38 14 30 27 14 27H-18M-18 41V13L-35 27z" />
  </BadgeIcon>
);
const Whistle = () => (
  <BadgeIcon>
    <path d="M-11-20H40q5 0 5 4v8q0 4-4 4.500L19 1q-4 .5-4 4C13 20 2 28-11 28A24 24 0 0 1-11-20zM18-19v7" />
    <circle cx="-11" cy="4" r="9" />
  </BadgeIcon>
);

const callouts = [
  { text: "Time Conflict", x: "12.46%", y: "37.1%", turn: -12.3, bg: "#fefce8", ink: "#432004", dot: "#fff085", icon: <Clock /> },
  { text: "Coach Conflict", x: "89.48%", y: "32.3%", turn: 5.7, bg: "#f7fee7", ink: "#192e03", dot: "#d8f999", icon: <Whistle /> },
  { text: "Repeat Contestant", x: "12.47%", y: "68.2%", turn: 9.1, bg: "#fff7ed", ink: "#441306", dot: "#ffd6a7", icon: <Repeat /> },
  { text: "Repeat Division", x: "88.84%", y: "78.4%", turn: -7.85, bg: "#feebef", ink: "#4d0218", dot: "#ffa0b8", icon: <Repeat /> },
];

export default function App() {
  return (
    <>
      <GlobalStyle />
      <Stage>
        <LeftHalf />
        <RightHalf />
        {callouts.map((c) => (
          <Callout key={c.text} $x={c.x} $y={c.y} $turn={c.turn} $bg={c.bg} $ink={c.ink}>
            <Badge $bg={c.dot}>{c.icon}</Badge>
            {c.text}
          </Callout>
        ))}
      </Stage>
    </>
  );
}
